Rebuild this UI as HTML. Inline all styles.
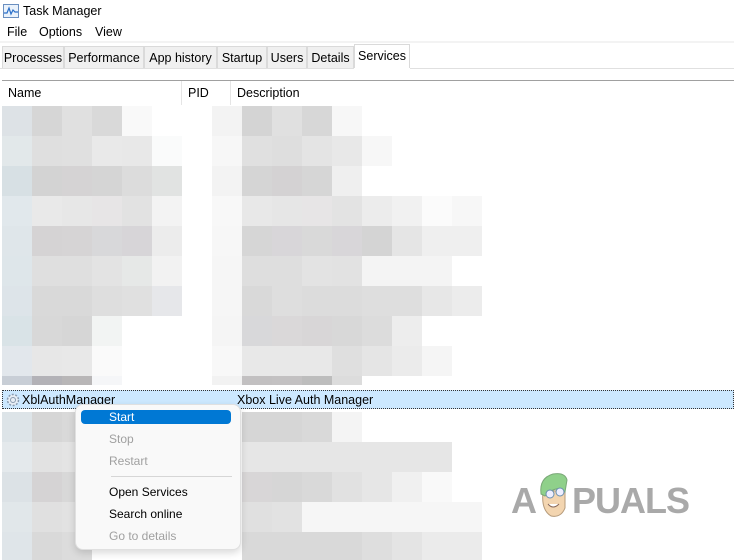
<!DOCTYPE html>
<html><head><meta charset="utf-8"><style>
*{margin:0;padding:0;box-sizing:border-box}
body{width:734px;height:560px;overflow:hidden;background:#fff;font-family:"Liberation Sans",sans-serif;font-size:12px;color:#000;position:relative}
.a{position:absolute}
.b{position:absolute;width:30px;height:30px}
.tab{position:absolute;top:46px;height:22px;background:#f0f0f0;border:1px solid #dadada;border-bottom:none;font-size:12.5px;padding-top:4px;text-align:center;color:#000}
.mi{position:absolute;left:109px;font-size:12px}
.dis{color:#a0a0a0}
</style></head><body>
<svg class="a" style="left:3px;top:4px" width="16" height="14" viewBox="0 0 16 14"><rect x="0.5" y="0.5" width="15" height="13" fill="#eaf2fb" stroke="#6a8fc0"/><polyline points="1,9 4,9 6,4 8,10 10,6 12,8 15,8" fill="none" stroke="#2a6fc9" stroke-width="1.2"/></svg>
<div class="a" style="left:23px;top:4px;font-size:12.5px">Task Manager</div>
<div class="a" style="left:7px;top:25px;font-size:12.5px">File</div>
<div class="a" style="left:39px;top:25px;font-size:12.5px">Options</div>
<div class="a" style="left:95px;top:25px;font-size:12.5px">View</div>
<div class="a" style="left:0;top:41px;width:734px;height:2px;background:#f3f3f3"></div>
<div class="tab" style="left:2px;width:62px">Processes</div>
<div class="tab" style="left:64px;width:80px">Performance</div>
<div class="tab" style="left:144px;width:73px">App history</div>
<div class="tab" style="left:217px;width:50px">Startup</div>
<div class="tab" style="left:267px;width:40px">Users</div>
<div class="tab" style="left:307px;width:47px">Details</div>
<div class="tab" style="left:354px;top:44px;width:56px;height:25px;background:#fff;padding-top:4px">Services</div>
<div class="a" style="left:0;top:68px;width:734px;height:1px;background:#e0e0e0"></div>
<div class="a" style="left:354px;top:68px;width:56px;height:1px;background:#fff"></div>
<div class="a" style="left:2px;top:80px;width:732px;height:1px;background:#a0a0a0"></div>
<div class="a" style="left:8px;top:86px;font-size:12.5px">Name</div>
<div class="a" style="left:188px;top:86px;font-size:12.5px">PID</div>
<div class="a" style="left:237px;top:86px;font-size:12.5px">Description</div>
<div class="a" style="left:181px;top:81px;width:1px;height:24px;background:#e5e5e5"></div>
<div class="a" style="left:230px;top:81px;width:1px;height:24px;background:#e5e5e5"></div>

<div class="b" style="left:2px;top:106px;background:#dde2e6"></div><div class="b" style="left:32px;top:106px;background:#d6d6d6"></div><div class="b" style="left:62px;top:106px;background:#e0e0e0"></div><div class="b" style="left:92px;top:106px;background:#d9d9d9"></div><div class="b" style="left:122px;top:106px;background:#f9f9f9"></div>
<div class="b" style="left:212px;top:106px;background:#f3f3f3"></div><div class="b" style="left:242px;top:106px;background:#d4d4d4"></div><div class="b" style="left:272px;top:106px;background:#e0e0e0"></div><div class="b" style="left:302px;top:106px;background:#d7d7d7"></div><div class="b" style="left:332px;top:106px;background:#f7f7f7"></div>

<div class="b" style="left:2px;top:136px;background:#e2e8ea"></div><div class="b" style="left:32px;top:136px;background:#dfdfdf"></div><div class="b" style="left:62px;top:136px;background:#e0e0e0"></div><div class="b" style="left:92px;top:136px;background:#e9e9e9"></div><div class="b" style="left:122px;top:136px;background:#e8e8e8"></div><div class="b" style="left:152px;top:136px;background:#fafbfb"></div>
<div class="b" style="left:212px;top:136px;background:#f7f7f7"></div><div class="b" style="left:242px;top:136px;background:#e0e0e0"></div><div class="b" style="left:272px;top:136px;background:#dedede"></div><div class="b" style="left:302px;top:136px;background:#e4e4e4"></div><div class="b" style="left:332px;top:136px;background:#e8e8e8"></div><div class="b" style="left:362px;top:136px;background:#f7f7f7"></div>

<div class="b" style="left:2px;top:166px;background:#d7e0e4"></div><div class="b" style="left:32px;top:166px;background:#d3d3d3"></div><div class="b" style="left:62px;top:166px;background:#d5d3d4"></div><div class="b" style="left:92px;top:166px;background:#d5d5d5"></div><div class="b" style="left:122px;top:166px;background:#dcdcdc"></div><div class="b" style="left:152px;top:166px;background:#e1e3e2"></div>
<div class="b" style="left:212px;top:166px;background:#f3f3f3"></div><div class="b" style="left:242px;top:166px;background:#d5d5d5"></div><div class="b" style="left:272px;top:166px;background:#d4d2d3"></div><div class="b" style="left:302px;top:166px;background:#d6d6d6"></div><div class="b" style="left:332px;top:166px;background:#efefef"></div>

<div class="b" style="left:2px;top:196px;background:#e1e8ec"></div><div class="b" style="left:32px;top:196px;background:#e9e9e9"></div><div class="b" style="left:62px;top:196px;background:#e7e7e7"></div><div class="b" style="left:92px;top:196px;background:#e7e5e6"></div><div class="b" style="left:122px;top:196px;background:#e2e2e2"></div><div class="b" style="left:152px;top:196px;background:#f3f3f3"></div>
<div class="b" style="left:212px;top:196px;background:#f8f8f8"></div><div class="b" style="left:242px;top:196px;background:#e8e8e8"></div><div class="b" style="left:272px;top:196px;background:#e6e6e6"></div><div class="b" style="left:302px;top:196px;background:#e7e5e6"></div><div class="b" style="left:332px;top:196px;background:#e3e3e3"></div><div class="b" style="left:362px;top:196px;background:#ececec"></div><div class="b" style="left:392px;top:196px;background:#f1f1f1"></div><div class="b" style="left:422px;top:196px;background:#fbfbfb"></div><div class="b" style="left:452px;top:196px;background:#f7f7f7"></div>

<div class="b" style="left:2px;top:226px;background:#dfe6ea"></div><div class="b" style="left:32px;top:226px;background:#d5d3d4"></div><div class="b" style="left:62px;top:226px;background:#d6d4d5"></div><div class="b" style="left:92px;top:226px;background:#d8d8da"></div><div class="b" style="left:122px;top:226px;background:#d7d5d8"></div><div class="b" style="left:152px;top:226px;background:#ececec"></div>
<div class="b" style="left:212px;top:226px;background:#f7f7f7"></div><div class="b" style="left:242px;top:226px;background:#d6d6d6"></div><div class="b" style="left:272px;top:226px;background:#d8d6d9"></div><div class="b" style="left:302px;top:226px;background:#d9d9d9"></div><div class="b" style="left:332px;top:226px;background:#d8d6d9"></div><div class="b" style="left:362px;top:226px;background:#d4d4d4"></div><div class="b" style="left:392px;top:226px;background:#e5e5e5"></div><div class="b" style="left:422px;top:226px;background:#efefef"></div><div class="b" style="left:452px;top:226px;background:#efefef"></div>

<div class="b" style="left:2px;top:256px;background:#dee6ea"></div><div class="b" style="left:32px;top:256px;background:#dfdfdf"></div><div class="b" style="left:62px;top:256px;background:#dfdfdf"></div><div class="b" style="left:92px;top:256px;background:#e3e3e3"></div><div class="b" style="left:122px;top:256px;background:#e6e8e7"></div><div class="b" style="left:152px;top:256px;background:#f2f2f2"></div>
<div class="b" style="left:212px;top:256px;background:#f6f6f6"></div><div class="b" style="left:242px;top:256px;background:#dedede"></div><div class="b" style="left:272px;top:256px;background:#dedede"></div><div class="b" style="left:302px;top:256px;background:#e3e3e3"></div><div class="b" style="left:332px;top:256px;background:#e2e2e2"></div><div class="b" style="left:362px;top:256px;background:#f4f4f4"></div><div class="b" style="left:392px;top:256px;background:#f4f4f4"></div><div class="b" style="left:422px;top:256px;background:#f4f4f4"></div>

<div class="b" style="left:2px;top:286px;background:#dde4e9"></div><div class="b" style="left:32px;top:286px;background:#d9d9d9"></div><div class="b" style="left:62px;top:286px;background:#d9d9d9"></div><div class="b" style="left:92px;top:286px;background:#dedede"></div><div class="b" style="left:122px;top:286px;background:#e0e0e0"></div><div class="b" style="left:152px;top:286px;background:#e6e7ea"></div>
<div class="b" style="left:212px;top:286px;background:#f6f6f6"></div><div class="b" style="left:242px;top:286px;background:#d9d9d9"></div><div class="b" style="left:272px;top:286px;background:#dedede"></div><div class="b" style="left:302px;top:286px;background:#dcdcdc"></div><div class="b" style="left:332px;top:286px;background:#dcdcdc"></div><div class="b" style="left:362px;top:286px;background:#dedede"></div><div class="b" style="left:392px;top:286px;background:#dedede"></div><div class="b" style="left:422px;top:286px;background:#e7e7e7"></div><div class="b" style="left:452px;top:286px;background:#ececec"></div>

<div class="b" style="left:2px;top:316px;background:#d9e3e7"></div><div class="b" style="left:32px;top:316px;background:#d8d8d8"></div><div class="b" style="left:62px;top:316px;background:#d6d6d6"></div><div class="b" style="left:92px;top:316px;background:#f2f4f3"></div>
<div class="b" style="left:212px;top:316px;background:#f5f5f5"></div><div class="b" style="left:242px;top:316px;background:#d8d8da"></div><div class="b" style="left:272px;top:316px;background:#dad8d9"></div><div class="b" style="left:302px;top:316px;background:#d8d6d7"></div><div class="b" style="left:332px;top:316px;background:#d8d8d8"></div><div class="b" style="left:362px;top:316px;background:#dcdcdc"></div><div class="b" style="left:392px;top:316px;background:#ededed"></div>

<div class="b" style="left:2px;top:346px;background:#e2e7ec"></div><div class="b" style="left:32px;top:346px;background:#e7e7e7"></div><div class="b" style="left:62px;top:346px;background:#e8e8e8"></div><div class="b" style="left:92px;top:346px;background:#fafafa"></div>
<div class="b" style="left:212px;top:346px;background:#f8f8f8"></div><div class="b" style="left:242px;top:346px;background:#e8e8e8"></div><div class="b" style="left:272px;top:346px;background:#e8e8e8"></div><div class="b" style="left:302px;top:346px;background:#e8e8e8"></div><div class="b" style="left:332px;top:346px;background:#dfdfdf"></div><div class="b" style="left:362px;top:346px;background:#e5e5e5"></div><div class="b" style="left:392px;top:346px;background:#ebebeb"></div><div class="b" style="left:422px;top:346px;background:#f5f5f5"></div>

<div class="b" style="left:2px;top:376px;height:9px;background:#c8ced6"></div><div class="b" style="left:32px;top:376px;height:9px;background:#b3b2b7"></div><div class="b" style="left:62px;top:376px;height:9px;background:#b8b6b7"></div><div class="b" style="left:92px;top:376px;height:9px;background:#f5f6f8"></div>
<div class="b" style="left:212px;top:376px;height:9px;background:#f2f2f2"></div><div class="b" style="left:242px;top:376px;height:9px;background:#c2c0c1"></div><div class="b" style="left:272px;top:376px;height:9px;background:#c3c1c2"></div><div class="b" style="left:302px;top:376px;height:9px;background:#bdbdbd"></div><div class="b" style="left:332px;top:376px;height:9px;background:#dcdcdc"></div>

<div class="b" style="left:2px;top:412px;background:#dde4e8"></div><div class="b" style="left:32px;top:412px;background:#d6d6d6"></div><div class="b" style="left:62px;top:412px;background:#d9d9d9"></div>
<div class="b" style="left:242px;top:412px;background:#d6d6d6"></div><div class="b" style="left:272px;top:412px;background:#d6d6d6"></div><div class="b" style="left:302px;top:412px;background:#d9d9d9"></div><div class="b" style="left:332px;top:412px;background:#f4f4f4"></div>
<div class="b" style="left:2px;top:442px;background:#e4e9ec"></div><div class="b" style="left:32px;top:442px;background:#e2e2e2"></div><div class="b" style="left:62px;top:442px;background:#e4e4e4"></div>
<div class="b" style="left:242px;top:442px;width:210px;background:#e6e6e6"></div>
<div class="b" style="left:2px;top:472px;background:#dce2e6"></div><div class="b" style="left:32px;top:472px;background:#d5d3d4"></div><div class="b" style="left:62px;top:472px;background:#d8d8d8"></div>
<div class="b" style="left:242px;top:472px;background:#d8d6d7"></div><div class="b" style="left:272px;top:472px;background:#d6d6d6"></div><div class="b" style="left:302px;top:472px;background:#d9d9d9"></div><div class="b" style="left:332px;top:472px;background:#e1e1e1"></div><div class="b" style="left:362px;top:472px;background:#e6e6e6"></div><div class="b" style="left:392px;top:472px;background:#f0f0f0"></div><div class="b" style="left:422px;top:472px;background:#f9f9f9"></div>
<div class="b" style="left:2px;top:502px;background:#e1e7ea"></div><div class="b" style="left:32px;top:502px;background:#e0e0e0"></div><div class="b" style="left:62px;top:502px;background:#e2e2e2"></div>
<div class="b" style="left:242px;top:502px;background:#e0e0e0"></div><div class="b" style="left:272px;top:502px;background:#e2e2e2"></div><div class="b" style="left:302px;top:502px;width:180px;background:#f6f6f6"></div>
<div class="b" style="left:2px;top:532px;height:28px;background:#dfe5e9"></div><div class="b" style="left:32px;top:532px;height:28px;background:#d9d9d9"></div><div class="b" style="left:62px;top:532px;height:28px;background:#dcdcdc"></div>
<div class="b" style="left:242px;top:532px;height:28px;width:120px;background:#d9d9d9"></div><div class="b" style="left:362px;top:532px;height:28px;background:#dedede"></div><div class="b" style="left:392px;top:532px;height:28px;background:#e4e4e4"></div><div class="b" style="left:422px;top:532px;height:28px;width:60px;background:#ebebeb"></div>

<div class="a" style="left:2px;top:390px;width:732px;height:19px;background:#cce8ff;border:1px dotted #333"></div>
<svg class="a" style="left:5px;top:392px" width="16" height="16" viewBox="0 0 16 16"><circle cx="8" cy="8" r="5.5" fill="#e8eef5" stroke="#8a9bb0" stroke-width="1.5" stroke-dasharray="2 1.5"/><circle cx="8" cy="8" r="2.5" fill="none" stroke="#8a9bb0"/></svg>
<div class="a" style="left:22px;top:393px;font-size:12.5px">XblAuthManager</div>
<div class="a" style="left:237px;top:393px;font-size:12.5px">Xbox Live Auth Manager</div>

<div class="a" style="left:75px;top:404px;width:166px;height:146px;background:#f9f9f9;border:1px solid #e0e0e0;border-radius:8px;box-shadow:0 3px 8px rgba(0,0,0,0.15)"></div>
<div class="a" style="left:81px;top:410px;width:150px;height:14px;background:#0078d4;border-radius:4px"></div>
<div class="mi" style="top:410px;color:#fff">Start</div>
<div class="mi dis" style="top:432px">Stop</div>
<div class="mi dis" style="top:454px">Restart</div>
<div class="a" style="left:111px;top:476px;width:121px;height:1px;background:#d6d6d6"></div>
<div class="mi" style="top:485px">Open Services</div>
<div class="mi" style="top:507px">Search online</div>
<div class="mi dis" style="top:529px">Go to details</div>

<div class="a" style="left:511px;top:483px;font-size:36px;font-weight:bold;color:#a9a9a9;line-height:36px">A</div>
<div class="a" style="left:572px;top:483px;font-size:36px;font-weight:bold;color:#a9a9a9;line-height:36px;letter-spacing:-1px">PUALS</div>
<svg class="a" style="left:535px;top:470px" width="38" height="50" viewBox="0 0 38 50">
<path d="M8 22 Q6 40 16 46 Q26 48 30 38 L30 20 Z" fill="#f3d5b0" stroke="#b59a7a"/>
<path d="M6 24 Q4 8 18 4 Q30 2 32 10 L30 22 Q22 14 10 26 Z" fill="#8fd08a" stroke="#7aa877"/>
<circle cx="15" cy="24" r="4" fill="#eef" stroke="#6a8fb0"/><circle cx="25" cy="22" r="4" fill="#eef" stroke="#6a8fb0"/>
<path d="M13 34 Q18 40 24 34" fill="#fff" stroke="#8a6a5a"/>
</svg>
</body></html>
